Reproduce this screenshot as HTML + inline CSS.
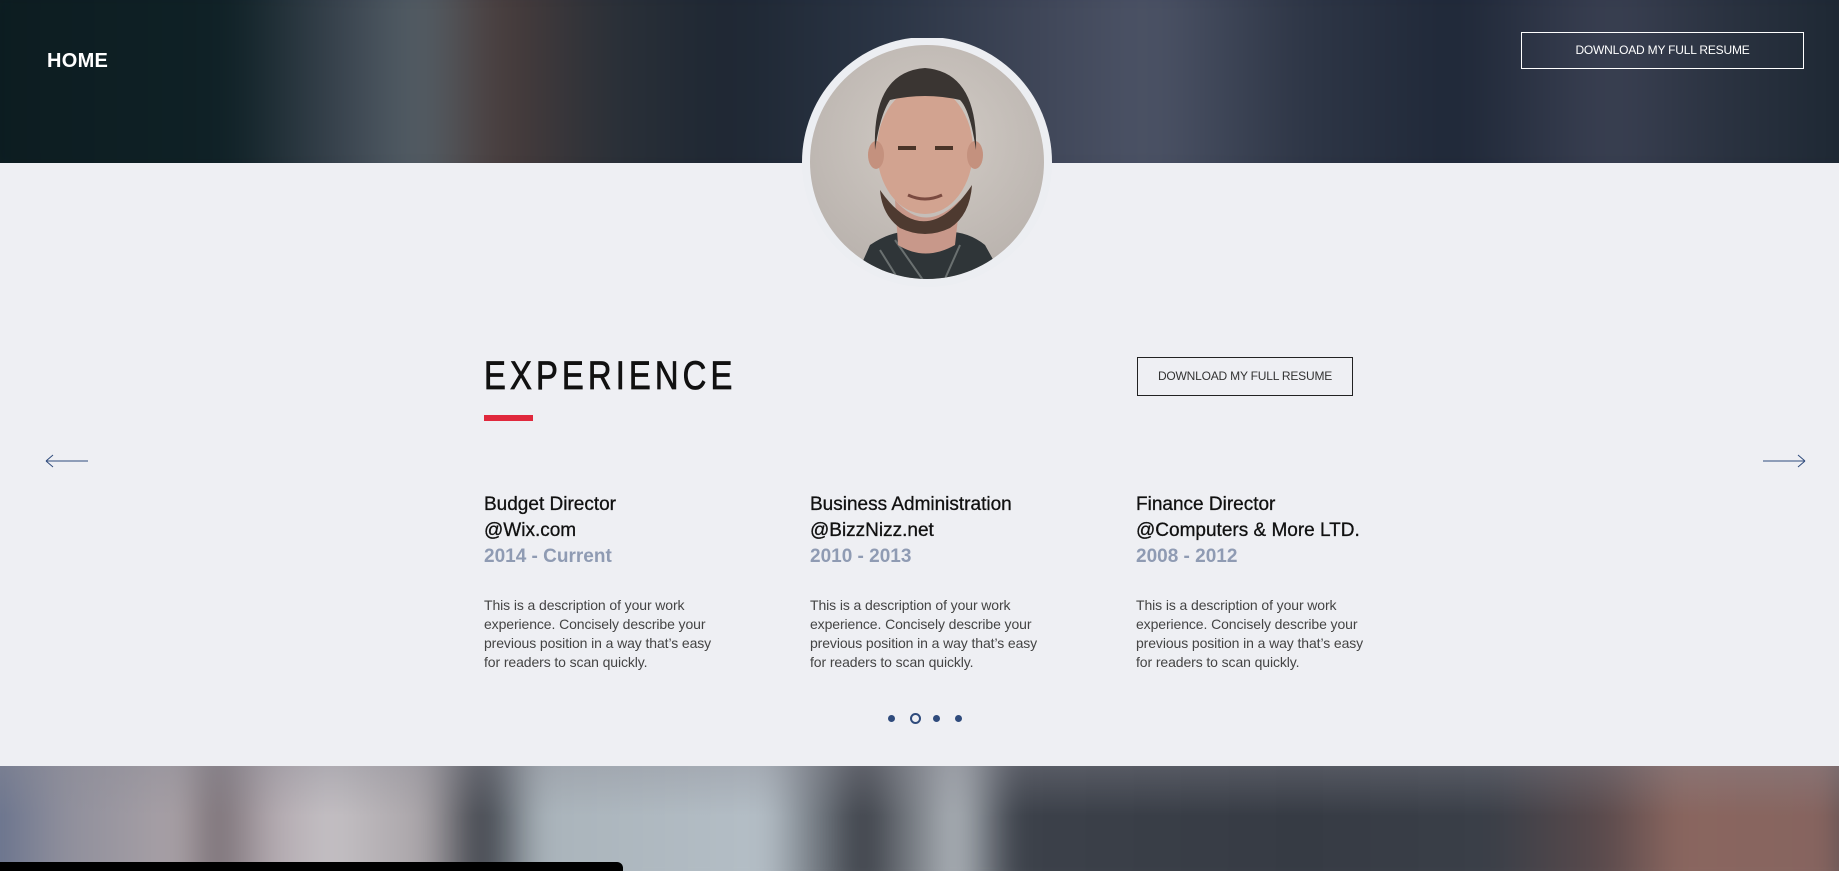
<!DOCTYPE html>
<html><head><meta charset="utf-8"><style>
*{margin:0;padding:0;box-sizing:border-box}
body{width:1839px;height:871px;overflow:hidden;background:#eeeff3;font-family:"Liberation Sans",sans-serif;position:relative}
.hdr{position:absolute;left:0;top:0;width:1839px;height:163px;overflow:hidden;background:#1c2430}
.hdr .b{position:absolute;inset:-40px;filter:blur(22px);background:
linear-gradient(90deg,#0c1c20 0%,#0f2126 14%,#3b4550 20%,#556068 24%,#4a3d3c 28%,#2a3038 34%,#1e2733 40%,#2a3444 48%,#3f4658 56%,#4c5366 62%,#2e3646 70%,#1f2838 78%,#3a4052 86%,#2a3240 92%,#1a2530 100%)}
.bot{position:absolute;left:0;top:766px;width:1839px;height:105px;overflow:hidden}
.bot .b{position:absolute;inset:-30px;filter:blur(14px);background:
linear-gradient(90deg,#5d6a88 0%,#8f8f9c 5%,#a9a1a6 11%,#7a7076 13%,#b3aab0 16%,#c4c0c4 19%,#a9a4a8 24%,#3c4048 27%,#aab4bb 30%,#b4bec6 42%,#3a3e46 47%,#b0b6bc 52%,#3c414a 55%,#363b44 70%,#3a3f48 80%,#5a4a4c 86%,#8a665f 90%,#86645f 98%,#353a42 100%)}
.bot .t{position:absolute;left:0;right:0;top:0;height:50px;background:linear-gradient(180deg,rgba(140,140,150,.35),rgba(0,0,0,0))}
.blk{position:absolute;left:0;top:862px;width:623px;height:9px;background:#000;border-top-right-radius:6px}
.home{position:absolute;left:47px;top:50px;color:#fff;font-weight:bold;font-size:20px;letter-spacing:.3px}
.btn1{position:absolute;left:1521px;top:32px;width:283px;height:37px;border:1px solid #fff;color:#fff;font-size:12px;text-align:center;line-height:35px;letter-spacing:-.2px}
.btn2{position:absolute;left:1137px;top:357px;width:216px;height:39px;border:1px solid #222;color:#333;font-size:12px;text-align:center;line-height:37px;letter-spacing:-.2px}
h1{position:absolute;left:484px;top:354px;font-size:40px;font-weight:normal;letter-spacing:5px;color:#111;line-height:44px;transform:scaleX(.82);transform-origin:left;-webkit-text-stroke:.8px #111}
.red{position:absolute;left:484px;top:415px;width:49px;height:6px;background:#e0283c}
.col{position:absolute;top:492px;width:260px}
.col .t{font-size:19px;line-height:26px;color:#111;-webkit-text-stroke:.3px #111}
.col .d{font-size:19px;line-height:26px;color:#8f9bb3;font-weight:bold}
.col p{margin-top:26px;font-size:14px;line-height:19px;color:#444;width:236px;letter-spacing:-.1px}
.arr{position:absolute;top:454px}
.dot{position:absolute;top:715px;width:7px;height:7px;border-radius:50%;background:#2f4b7c}
</style></head><body>
<div class="hdr"><div class="b"></div></div>
<div class="home">HOME</div>
<div class="btn1">DOWNLOAD MY FULL RESUME</div>
<svg style="position:absolute;left:802px;top:38px" width="250" height="250" viewBox="802 38 250 250">
<defs><clipPath id="c"><circle cx="927" cy="162" r="117"/></clipPath>
<radialGradient id="bg" cx=".5" cy=".4" r=".6"><stop offset="0" stop-color="#d2ccc6"/><stop offset="1" stop-color="#b8b1ac"/></radialGradient></defs>
<circle cx="927" cy="162" r="125" fill="#eceef2"/>
<g clip-path="url(#c)">
<rect x="800" y="40" width="260" height="250" fill="url(#bg)"/>
<path d="M850 290 L870 245 Q900 225 925 235 Q960 225 985 245 L1010 290Z" fill="#2f3538"/>
<path d="M880 250 L905 290 M960 245 L940 290 M895 240 L930 290" stroke="#6a7070" stroke-width="2"/>
<path d="M895 200 Q925 235 960 200 L955 245 Q925 262 898 245Z" fill="#c8988a"/>
<ellipse cx="925" cy="150" rx="48" ry="64" fill="#d2a390"/>
<ellipse cx="876" cy="155" rx="8" ry="14" fill="#c4917e"/>
<ellipse cx="975" cy="155" rx="8" ry="14" fill="#c4917e"/>
<path d="M880 190 Q925 255 972 185 Q970 215 950 228 Q925 240 900 228 Q882 215 880 190Z" fill="#4e3a30"/>
<path d="M875 150 Q872 72 925 68 Q978 72 976 150 Q970 110 960 100 Q925 92 890 100 Q880 115 875 150Z" fill="#3a3532"/>
<path d="M898 148 h18 M935 148 h18" stroke="#4a3428" stroke-width="4"/>
<path d="M908 195 Q925 203 942 195" stroke="#7a4a40" stroke-width="3" fill="none"/>
</g></svg>
<h1>EXPERIENCE</h1>
<div class="red"></div>
<div class="btn2">DOWNLOAD MY FULL RESUME</div>
<svg class="arr" style="left:45px" width="44" height="14"><path d="M1 7 H43 M1 7 L8 1 M1 7 L8 13" stroke="#2f4b7c" stroke-width="1" fill="none"/></svg>
<svg class="arr" style="left:1762px" width="44" height="14"><path d="M1 7 H43 M43 7 L36 1 M43 7 L36 13" stroke="#2f4b7c" stroke-width="1" fill="none"/></svg>
<div class="col" style="left:484px"><div class="t">Budget Director<br>@Wix.com</div><div class="d">2014 - Current</div><p>This is a description of your work experience. Concisely describe your previous position in a way that’s easy for readers to scan quickly.</p></div>
<div class="col" style="left:810px"><div class="t">Business Administration<br>@BizzNizz.net</div><div class="d">2010 - 2013</div><p>This is a description of your work experience. Concisely describe your previous position in a way that’s easy for readers to scan quickly.</p></div>
<div class="col" style="left:1136px;width:270px"><div class="t">Finance Director<br>@Computers &amp; More LTD.</div><div class="d">2008 - 2012</div><p>This is a description of your work experience. Concisely describe your previous position in a way that’s easy for readers to scan quickly.</p></div>
<div class="dot" style="left:888px"></div>
<div class="dot" style="left:910px;top:713px;width:11px;height:11px;background:none;border:2px solid #2f4b7c"></div>
<div class="dot" style="left:933px"></div>
<div class="dot" style="left:955px"></div>
<div class="bot"><div class="b"></div><div class="t"></div></div>
<div class="blk"></div>
</body></html>
